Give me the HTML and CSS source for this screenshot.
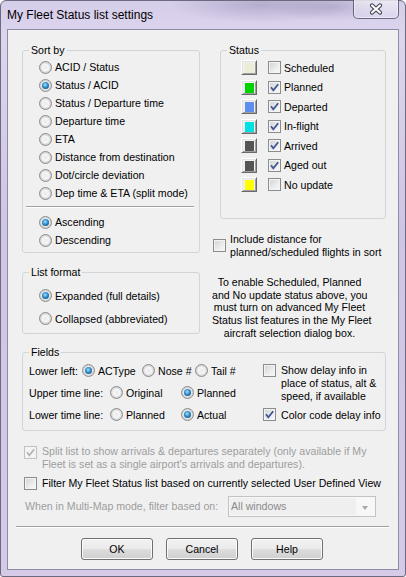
FILE: index.html
```html
<!DOCTYPE html>
<html lang="en">
<head>
    <meta charset="utf-8">
    <title>My Fleet Status list settings</title>
    <link rel="stylesheet" href="styles.css">
</head>
<body>
<div class="window">
    <div class="titlebar">
        <span class="title">My Fleet Status list settings</span>
        <span class="close">
            <svg width="46" height="19" viewBox="0 0 46 19">
                <path d="M19 6.5 L27 13.5 M27 6.5 L19 13.5" stroke="#3a3a4c" stroke-width="4.2" stroke-linecap="round" fill="none"/>
                <path d="M19 6.5 L27 13.5 M27 6.5 L19 13.5" stroke="#ffffff" stroke-width="2.2" stroke-linecap="round" fill="none"/>
            </svg>
        </span>
    </div>

    <div class="client">
        <div class="main">
            <div class="top">
                <div class="col-left">
                    <fieldset class="group">
                        <legend>Sort by</legend>
                        <div class="sort-body">
                            <label class="opt"><span class="radio"></span>ACID / Status</label>
                            <label class="opt"><span class="radio on"></span>Status / ACID</label>
                            <label class="opt"><span class="radio"></span>Status / Departure time</label>
                            <label class="opt"><span class="radio"></span>Departure time</label>
                            <label class="opt"><span class="radio"></span>ETA</label>
                            <label class="opt"><span class="radio"></span>Distance from destination</label>
                            <label class="opt"><span class="radio"></span>Dot/circle deviation</label>
                            <label class="opt"><span class="radio"></span>Dep time &amp; ETA (split mode)</label>
                            <div class="sep"></div>
                            <label class="opt"><span class="radio on"></span>Ascending</label>
                            <label class="opt"><span class="radio"></span>Descending</label>
                        </div>
                    </fieldset>

                    <fieldset class="group format">
                        <legend>List format</legend>
                        <div class="format-body">
                            <label class="opt"><span class="radio on"></span>Expanded (full details)</label>
                            <label class="opt"><span class="radio"></span>Collapsed (abbreviated)</label>
                        </div>
                    </fieldset>
                </div>

                <div class="col-right">
                    <fieldset class="group status">
                        <legend>Status</legend>
                        <div class="status-body">
                            <div class="status-row">
                                <span class="swatch"><span class="fill scheduled"></span></span>
                                <span class="check"></span>Scheduled
                            </div>
                            <div class="status-row">
                                <span class="swatch"><span class="fill planned"></span></span>
                                <span class="check"><svg class="tick" viewBox="0 0 11 11"><path d="M2 5.3 L4.3 8.2 L9.2 2.2"/></svg></span>Planned
                            </div>
                            <div class="status-row">
                                <span class="swatch"><span class="fill departed"></span></span>
                                <span class="check"><svg class="tick" viewBox="0 0 11 11"><path d="M2 5.3 L4.3 8.2 L9.2 2.2"/></svg></span>Departed
                            </div>
                            <div class="status-row">
                                <span class="swatch"><span class="fill inflight"></span></span>
                                <span class="check"><svg class="tick" viewBox="0 0 11 11"><path d="M2 5.3 L4.3 8.2 L9.2 2.2"/></svg></span>In-flight
                            </div>
                            <div class="status-row">
                                <span class="swatch"><span class="fill arrived"></span></span>
                                <span class="check"><svg class="tick" viewBox="0 0 11 11"><path d="M2 5.3 L4.3 8.2 L9.2 2.2"/></svg></span>Arrived
                            </div>
                            <div class="status-row">
                                <span class="swatch"><span class="fill aged"></span></span>
                                <span class="check"><svg class="tick" viewBox="0 0 11 11"><path d="M2 5.3 L4.3 8.2 L9.2 2.2"/></svg></span>Aged out
                            </div>
                            <div class="status-row">
                                <span class="swatch"><span class="fill noupdate"></span></span>
                                <span class="check"></span>No update
                            </div>
                        </div>
                    </fieldset>

                    <div class="include">
                        <span class="check"></span>
                        <span class="lines">Include distance for<br>planned/scheduled flights in sort</span>
                    </div>

                    <p class="note">To enable Scheduled, Planned<br>and No update status above, you<br>must turn on advanced My Fleet<br>Status list features in the My Fleet<br>aircraft selection dialog box.</p>
                </div>
            </div>

            <fieldset class="group fields">
                <legend>Fields</legend>
                <div class="fields-body">
                    <div class="fields-left">
                        <div class="frow">
                            <span class="flabel short">Lower left:</span>
                            <label class="opt w60"><span class="radio on"></span>ACType</label>
                            <label class="opt w53"><span class="radio"></span>Nose #</label>
                            <label class="opt"><span class="radio"></span>Tail #</label>
                        </div>
                        <div class="frow">
                            <span class="flabel">Upper time line:</span>
                            <label class="opt w71"><span class="radio"></span>Original</label>
                            <label class="opt"><span class="radio on"></span>Planned</label>
                        </div>
                        <div class="frow">
                            <span class="flabel">Lower time line:</span>
                            <label class="opt w71"><span class="radio"></span>Planned</label>
                            <label class="opt"><span class="radio on"></span>Actual</label>
                        </div>
                    </div>
                    <div class="fields-right">
                        <div class="delay">
                            <span class="check"></span>
                            <span class="lines">Show delay info in<br>place of status, alt &amp;<br>speed, if available</span>
                        </div>
                        <div class="frow">
                            <span class="check"><svg class="tick" viewBox="0 0 11 11"><path d="M2 5.3 L4.3 8.2 L9.2 2.2"/></svg></span>
                            <span class="gap5">Color code delay info</span>
                        </div>
                    </div>
                </div>
            </fieldset>

            <div class="split disabled">
                <span class="check off"><svg class="tick" viewBox="0 0 11 11"><path d="M2 5.3 L4.3 8.2 L9.2 2.2"/></svg></span>
                <span class="lines13">Split list to show arrivals &amp; departures separately (only available if My<br>Fleet is set as a single airport's arrivals and departures).</span>
            </div>

            <div class="filter">
                <span class="check"></span>
                <span>Filter My Fleet Status list based on currently selected User Defined View</span>
            </div>

            <div class="multimap">
                <span class="mm-label disabled">When in Multi-Map mode, filter based on:</span>
                <div class="combo">
                    <span class="combo-text">All windows</span>
                    <span class="combo-arrow"></span>
                </div>
            </div>
        </div>

        <div class="sep wide"></div>

        <div class="buttons">
            <button class="btn">OK</button>
            <button class="btn">Cancel</button>
            <button class="btn">Help</button>
        </div>
    </div>
</div>
</body>
</html>
```

FILE: styles.css
```css
body {
    margin: 0;
    font-family: "Liberation Sans", Arial, sans-serif;
    font-size: 10.6px;
    color: #000;
}

.window {
    width: 406px;
    height: 577px;
    box-sizing: border-box;
    border: 1px solid #6b6a7e;
    border-radius: 6px 6px 3px 3px;
    background:
        radial-gradient(ellipse 90px 18px at 260px 4px, rgba(120, 112, 150, 0.35), transparent),
        radial-gradient(ellipse 60px 14px at 330px 6px, rgba(120, 112, 150, 0.3), transparent),
        linear-gradient(180deg, #d6cdea 0%, #ddd5ee 6%, #cfc5e4 40%, #d5cbe8 100%);
}

.titlebar {
    height: 28px;
    display: flex;
}

.title {
    flex: 1;
    padding-left: 6px;
    line-height: 28px;
    font-size: 12px;
}

.close {
    width: 46px;
    height: 19px;
    margin: -1px 6px 0 0;
    box-sizing: border-box;
    border: 1px solid rgba(62, 60, 88, 0.75);
    border-top: none;
    border-radius: 0 0 5px 5px;
    background: linear-gradient(180deg, rgba(255, 255, 255, 0.55), rgba(225, 220, 240, 0.35));
    box-shadow: inset 0 0 0 1px rgba(255, 255, 255, 0.45);
    display: flex;
    justify-content: center;
}

.close svg {
    flex: none;
    margin-top: -1px;
}

.client {
    height: 541px;
    margin: 0 6px;
    box-sizing: border-box;
    border: 1px solid #8d8ca4;
    background-color: #f0f0f0;
    padding-top: 14px;
}

.main {
    padding: 0 12px 0 14px;
}

.top {
    display: flex;
    align-items: flex-start;
    gap: 12px;
}

.col-left {
    width: 178px;
}

.col-right {
    width: 174px;
}

/* group boxes */
.group {
    margin: 0;
    padding: 0;
    min-width: 0;
    box-sizing: border-box;
    border: 1px solid #d0d5d9;
    border-radius: 3px;
}

.group legend {
    margin-left: 6px;
    padding: 0 2px;
    line-height: 13px;
}

.sort-body {
    padding: 1px 5px 3px 3px;
}

.format {
    margin-top: 13px;
}

.format-body {
    padding: 5px 0 3px 3px;
}

.format-body .opt {
    height: 23px;
}

.status {
    margin-left: 8px;
}

.status-body {
    padding: 1px 0 23.5px 20px;
}

.status-row {
    height: 19.5px;
    display: flex;
    align-items: center;
}

.status-row .check {
    margin: 0 3px 0 11px;
}

/* options */
.opt {
    height: 18px;
    display: flex;
    align-items: center;
    gap: 3px;
    white-space: nowrap;
}

.sort-body .opt, .format-body .opt {
    margin-left: 13px;
}

.radio {
    flex: none;
    width: 13px;
    height: 13px;
    box-sizing: border-box;
    border-radius: 50%;
    border: 1px solid #8b8c8d;
    background: radial-gradient(circle at 50% 50%, #e9e9e9 0, #f6f6f6 40%, #d2d2d2 68%, #f2f2f2 78%);
    display: flex;
    align-items: center;
    justify-content: center;
}

.radio.on::after {
    content: "";
    width: 7px;
    height: 7px;
    border-radius: 50%;
    background: radial-gradient(circle at 45% 40%, #a8e6ff 0, #3a95d2 40%, #155b8e 75%, #0d3e66 100%);
}

.check {
    flex: none;
    width: 13px;
    height: 13px;
    box-sizing: border-box;
    border: 1px solid #8b8c8d;
    background: linear-gradient(135deg, #cfd1d4 0%, #eceded 60%, #f8f8f8 100%);
    box-shadow: inset 0 0 0 1px #f4f4f4;
    display: flex;
}

.check.off {
    border-color: #c2c2c2;
    background: #f4f4f4;
}

.tick {
    width: 11px;
    height: 11px;
}

.tick path {
    fill: none;
    stroke: #3f5693;
    stroke-width: 1.8;
}

.check.off .tick path {
    stroke: #b4b4b4;
}

.swatch {
    flex: none;
    width: 16px;
    height: 15px;
    box-sizing: border-box;
    border: 1px solid;
    border-color: #ffffff #6a6a6a #6a6a6a #ffffff;
    box-shadow: inset 1px 1px 0 #e3e3e3, inset -1px -1px 0 #a0a0a0;
    background-color: #f0f0f0;
    padding: 2px 2px 1px 3px;
}

.fill {
    display: block;
    width: 9px;
    height: 10px;
}

.scheduled { background-color: #edecd6; }
.planned { background-color: #00d400; }
.departed { background-color: #5e8ff0; }
.inflight { background-color: #00e2e2; }
.arrived { background-color: #545454; }
.aged { background-color: #545454; }
.noupdate { background-color: #ffff00; }

.sep {
    height: 1px;
    border-top: 1px solid #a0a0a0;
    background-color: #ffffff;
    margin: 4px 0 5px 0;
}

.include {
    margin: 14px 0 0 1px;
    display: flex;
    align-items: center;
    gap: 4px;
}

.lines {
    line-height: 12.6px;
    white-space: nowrap;
}

.note {
    width: 155px;
    margin: 18px 0 0 0;
    line-height: 12.6px;
    text-align: center;
    white-space: nowrap;
}

/* fields */
.fields {
    margin-top: 6.5px;
}

.fields-body {
    display: flex;
    padding: 1px 0 4.3px 0;
}

.fields-left {
    width: 240px;
    box-sizing: border-box;
    padding-left: 6px;
}

.frow {
    height: 22px;
    display: flex;
    align-items: center;
    white-space: nowrap;
}

.frow .opt {
    height: 22px;
}

.flabel {
    width: 81px;
}

.flabel.short {
    width: 53px;
}

.w60 { width: 60px; }
.w53 { width: 53px; }
.w71 { width: 71px; }

.delay {
    height: 44px;
    box-sizing: border-box;
    padding-top: 4.7px;
    display: flex;
    align-items: flex-start;
    gap: 5px;
}

.gap5 {
    margin-left: 5px;
}

/* lower options */
.disabled {
    color: #9d9d9d;
}

.split {
    margin: 14px 0 0 2px;
    display: flex;
    align-items: flex-start;
    gap: 5px;
}

.split .check {
    margin-top: 1px;
}

.lines13 {
    line-height: 13px;
    white-space: nowrap;
}

.filter {
    margin: 6px 0 0 2px;
    height: 13px;
    display: flex;
    align-items: center;
    gap: 5px;
    white-space: nowrap;
}

.multimap {
    margin: 6px 0 0 3px;
    display: flex;
    align-items: center;
}

.mm-label {
    width: 203px;
    white-space: nowrap;
}

.combo {
    width: 148px;
    height: 21px;
    box-sizing: border-box;
    border: 1px solid #c3c3c3;
    background-color: #f7f7f7;
    display: flex;
    align-items: stretch;
    padding: 1px;
}

.combo-text {
    flex: 1;
    background-color: #efefef;
    color: #8a8a8a;
    line-height: 17px;
    padding-left: 1px;
}

.combo-arrow {
    width: 18px;
    position: relative;
}

.combo-arrow::after {
    content: "";
    position: absolute;
    left: 6px;
    top: 8px;
    border-left: 3.5px solid transparent;
    border-right: 3.5px solid transparent;
    border-top: 4px solid #a8a8a8;
}

.sep.wide {
    margin: 9px 9px 0 8px;
}

.buttons {
    margin-top: 10px;
    display: flex;
    justify-content: center;
    gap: 13px;
    padding-right: 2px;
}

.btn {
    width: 72px;
    height: 22px;
    padding: 0;
    font: inherit;
    color: #000;
    border: 1px solid #707070;
    border-radius: 3px;
    background: linear-gradient(180deg, #f2f2f2 0%, #ebebeb 48%, #dddddd 52%, #cfcfcf 100%);
    box-shadow: inset 0 0 0 1px #fbfbfb;
}
```
